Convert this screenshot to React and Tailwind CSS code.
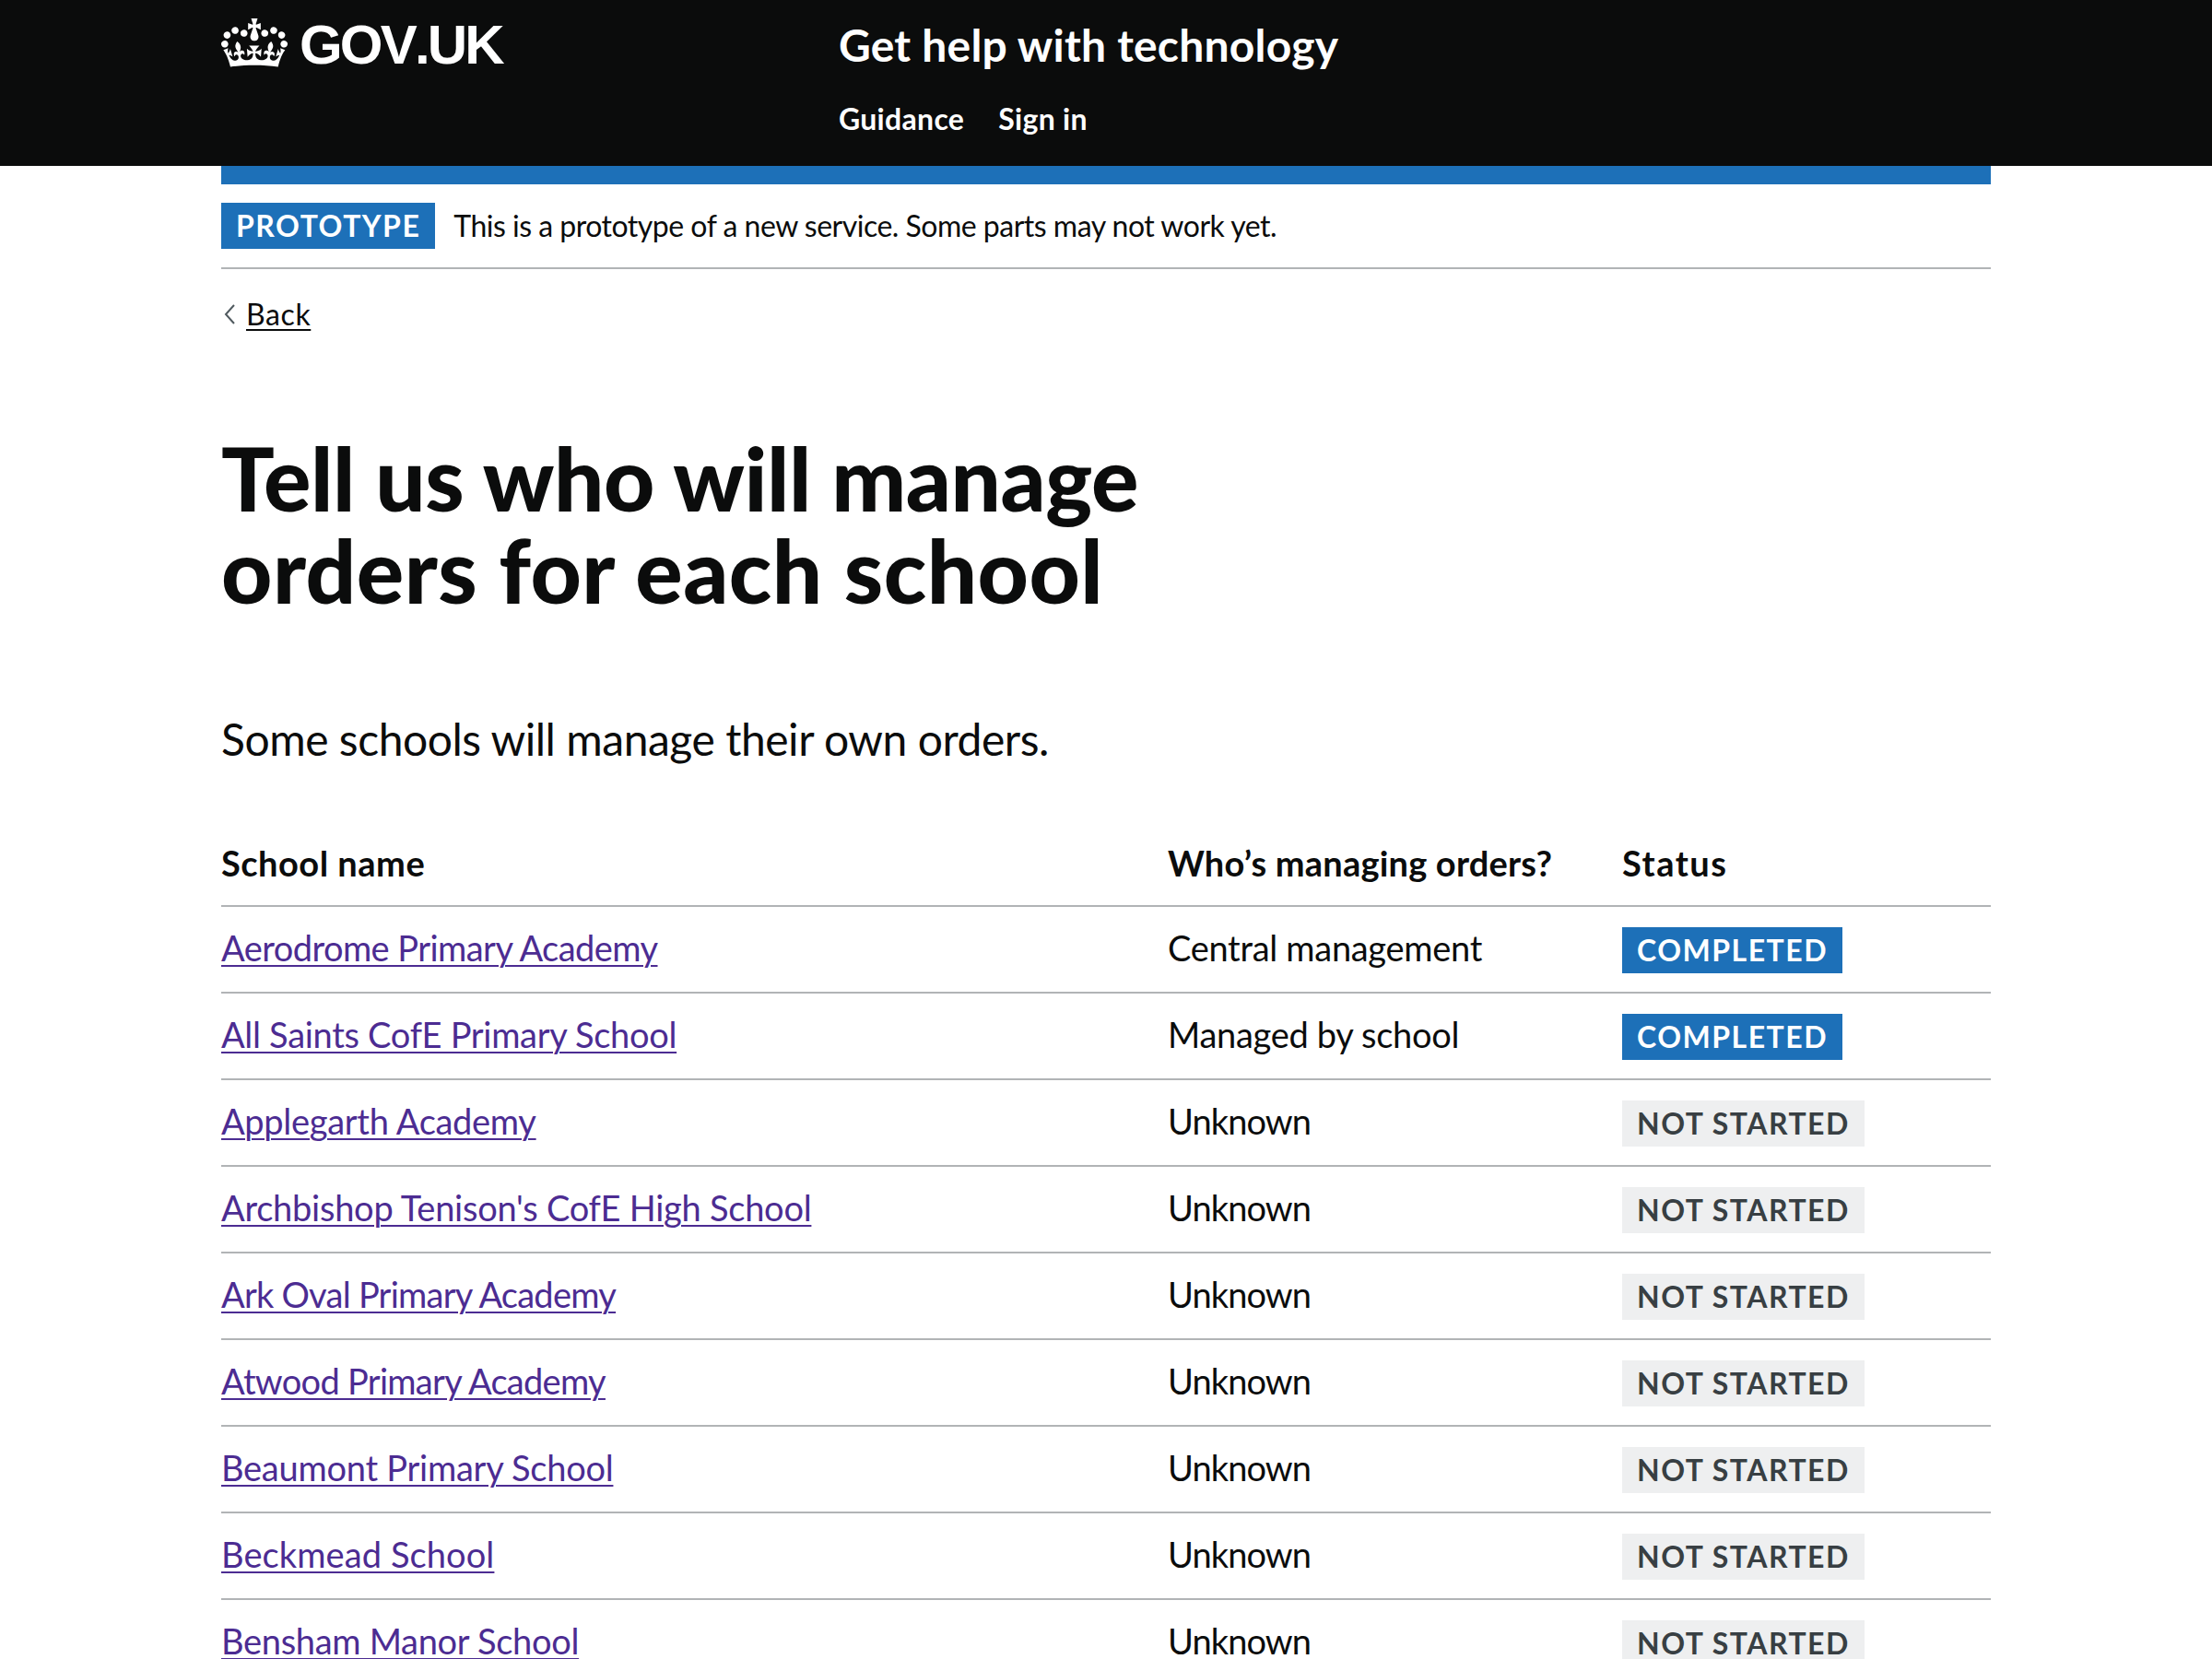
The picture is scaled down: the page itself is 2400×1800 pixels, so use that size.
import React from 'react'

const CROWN = "M25 30.2c3.5 1.5 7.7-.2 9.1-3.7 1.5-3.6-.2-7.8-3.9-9.2-3.6-1.4-7.6.3-9.1 3.9-1.4 3.5.3 7.5 3.9 9zM9 39.5c3.6 1.5 7.8-.2 9.2-3.7 1.5-3.6-.2-7.8-3.9-9.1-3.6-1.5-7.6.2-9.1 3.8-1.4 3.5.3 7.5 3.8 9zM4.4 57.2c3.5 1.5 7.7-.2 9.1-3.8 1.5-3.6-.2-7.7-3.9-9.1-3.5-1.5-7.6.3-9.1 3.8-1.4 3.5.3 7.6 3.9 9.1zm38.3-21.4c3.5 1.5 7.7-.2 9.1-3.8 1.5-3.6-.2-7.7-3.9-9.1-3.6-1.5-7.6.3-9.1 3.8-1.3 3.6.4 7.7 3.9 9.1zm64.4-5.6c-3.6 1.5-7.8-.2-9.1-3.7-1.5-3.6.2-7.8 3.8-9.2 3.6-1.4 7.7.3 9.2 3.9 1.3 3.5-.4 7.5-3.9 9zm15.9 9.3c-3.6 1.5-7.7-.2-9.1-3.7-1.5-3.6.2-7.8 3.7-9.1 3.6-1.5 7.7.2 9.2 3.8 1.5 3.5-.3 7.5-3.8 9zm4.7 17.7c-3.6 1.5-7.8-.2-9.2-3.8-1.5-3.6.2-7.7 3.9-9.1 3.6-1.5 7.7.3 9.2 3.8 1.3 3.5-.4 7.6-3.9 9.1zM89.3 35.8c-3.6 1.5-7.8-.2-9.2-3.8-1.4-3.6.2-7.7 3.9-9.1 3.6-1.5 7.7.3 9.2 3.8 1.4 3.6-.3 7.7-3.9 9.1zM69.7 17.7l8.9 4.7V9.3l-8.9 2.8c-.2-.3-.5-.6-.9-.9L72.4 0H59.6l3.6 11.2c-.3.3-.6.5-.9.9l-8.8-2.8v13.1l8.8-4.7c.3.3.6.7.9.9l-5 15.4v.1c-.2.8-.4 1.6-.4 2.4 0 4.1 3.1 7.5 7 8.1h.2c.3 0 .7.1 1 .1.4 0 .7 0 1-.1h.2c4-.6 7.1-4.1 7.1-8.1 0-.8-.1-1.7-.4-2.4V34l-5.1-15.4c.4-.2.7-.6 1-.9zM66 92.8c16.9 0 32.8 1.1 47.1 3.2 4-16.9 8.9-26.7 14-33.5l-9.6-3.4c1 4.9 1.1 7.2 0 10.2-1.5-1.4-3-4.3-4.2-8.7L108.6 76c2.8-2 5-3.2 7.5-3.3-4.4 9.4-10 11.9-13.6 11.2-4.3-.8-6.3-4.6-5.6-7.9 1-4.7 5.7-5.9 8-.5 4.3-8.7-3-11.4-7.6-8.8 7.1-7.2 7.9-13.5 2.1-21.1-8 6.1-8.1 12.3-4.5 20.8-4.7-5.4-12.1-2.5-9.5 6.2 3.4-5.2 7.9-2 7.2 3.1-.6 4.3-6.4 7.8-13.5 7.2-10.3-.9-10.9-8-11.2-13.8 2.5-.5 7.1 1.8 11 7.3L80.2 60c-4.1 4.4-8 5.3-12.3 5.4 1.4-4.4 8-11.6 8-11.6H55.5s6.4 7.2 7.9 11.6c-4.2-.1-8-1-12.3-5.4l1.4 16.4c3.9-5.5 8.5-7.7 10.9-7.3-.3 5.8-.9 12.8-11.1 13.8-7.2.6-12.9-2.9-13.5-7.2-.7-5 3.8-8.3 7.1-3.1 2.7-8.7-4.6-11.6-9.4-6.2 3.7-8.5 3.6-14.7-4.6-20.8-5.8 7.6-5 13.9 2.2 21.1-4.7-2.6-11.9.1-7.7 8.8 2.3-5.5 7.1-4.2 8.1.5.7 3.3-1.3 7.1-5.7 7.9-3.5.7-9-1.8-13.5-11.2 2.5.1 4.7 1.3 7.5 3.3l-4.7-15.4c-1.2 4.4-2.7 7.2-4.3 8.7-1.1-3-.9-5.3 0-10.2l-9.5 3.4c5 6.9 9.9 16.7 14 33.5 14.8-2.1 30.8-3.2 47.7-3.2z"

// tracking is per name because the stand-in font runs wider on some words
const schools = [
  { name: "Aerodrome Primary Academy", track: "tracking-[-0.55px]", who: "Central management", done: true },
  { name: "All Saints CofE Primary School", track: "tracking-[-0.3px]", who: "Managed by school", done: true },
  { name: "Applegarth Academy", track: "tracking-[-0.3px]", who: "Unknown" },
  { name: "Archbishop Tenison's CofE High School", track: "tracking-[-0.25px]", who: "Unknown" },
  { name: "Ark Oval Primary Academy", track: "tracking-[-0.75px]", who: "Unknown" },
  { name: "Atwood Primary Academy", track: "tracking-[-0.7px]", who: "Unknown" },
  { name: "Beaumont Primary School", track: "tracking-[-0.25px]", who: "Unknown" },
  { name: "Beckmead School", track: "tracking-[0.1px]", who: "Unknown" },
  { name: "Bensham Manor School", track: "tracking-[-0.3px]", who: "Unknown" },
]

const StatusTag = ({ done }) => (
  <span className={`inline-block h-[50px] px-4 text-[32px] leading-[50px] font-bold tracking-[1.5px] ${done ? "bg-[#1d70b8] text-white" : "bg-[#eeeff0] text-[#383f43]"}`}>
    {done ? "COMPLETED" : "NOT STARTED"}
  </span>
)

export default function App() {
  return (
    <div className="h-[1800px] overflow-hidden bg-white font-['Lato',sans-serif] text-[#0b0c0c]">
      {/* header */}
      <header className="h-[180px] bg-[#0b0c0c] text-white">
        <div className="mx-auto flex w-[1920px]">
          <div className="flex h-[100px] w-[670px] items-start pt-5">
            <svg viewBox="0 0 132 97" className="h-[53px] w-[72px] fill-white">
              <path d={CROWN} />
            </svg>
            <span className="mt-1 ml-[13px] font-['Liberation_Sans',sans-serif] text-[60px] leading-[50px] font-bold tracking-[-2.8px] [font-kerning:none]">GOV.UK</span>
          </div>
          <div>
            <div className="pt-[24px] text-[48px] leading-[50px] font-bold tracking-[0.2px]">Get help with technology</div>
            <nav className="mt-[30px] flex gap-[37px] text-[32px] leading-[50px] font-bold tracking-[0.3px]">
              <a>Guidance</a>
              <a>Sign in</a>
            </nav>
          </div>
        </div>
      </header>

      <main className="mx-auto w-[1920px]">
        <div className="h-5 bg-[#1d70b8]" />
        {/* phase banner */}
        <div className="flex items-center gap-5 border-b-2 border-[#b1b4b6] pt-5 pb-5">
          <span className="inline-block h-[50px] bg-[#1d70b8] px-4 text-[32px] leading-[50px] font-bold tracking-[1.5px] text-white">PROTOTYPE</span>
          <span className="text-[32px] leading-[50px] tracking-[-0.5px]">This is a prototype of a new service. Some parts may not work yet.</span>
        </div>

        <a className="mt-6 flex items-center text-[32px] leading-[50px]">
          <svg viewBox="0 0 12 22" className="mr-3 ml-[3px] h-[22px] w-3 fill-none stroke-[#505a5f] stroke-2"><path d="M11 1 2 11l9 10" /></svg>
          <span className="tracking-[0.6px] underline decoration-2 underline-offset-4">Back</span>
        </a>

        <h1 className="mt-[102px] w-[1200px] text-[96px] leading-[100px] font-black tracking-[-0.45px]">
          Tell us who will manage<br />
          <span className="tracking-[0.45px]">orders for each school</span>
        </h1>
        <p className="mt-[104px] text-[48px] leading-[60px] tracking-[-0.47px]">Some schools will manage their own orders.</p>

        <table className="mt-[59px] w-full table-fixed border-collapse">
          <thead>
            <tr className="h-[92px] border-b-2 border-[#b1b4b6] text-left text-[38px] font-bold tracking-[0.3px]">
              <th className="w-[1027px] font-bold tracking-[0.5px]">School name</th>
              <th className="w-[493px] font-bold tracking-[0.2px]">Who’s managing orders?</th>
              <th className="font-bold tracking-[1.5px]">Status</th>
            </tr>
          </thead>
          <tbody>
            {schools.map((s) => (
              <tr key={s.name} className="h-[94px] border-b-2 border-[#b1b4b6] text-[38px] tracking-[-0.3px]">
                <td className="pb-[3px]"><a className={`text-[#4c2c92] underline decoration-2 underline-offset-4 ${s.track}`}>{s.name}</a></td>
                <td className={s.done ? "pb-[3px]" : "pb-[3px] tracking-[-0.9px]"}>{s.who}</td>
                <td className="pb-[4px]"><StatusTag done={s.done} /></td>
              </tr>
            ))}
          </tbody>
        </table>
      </main>
    </div>
  )
}
